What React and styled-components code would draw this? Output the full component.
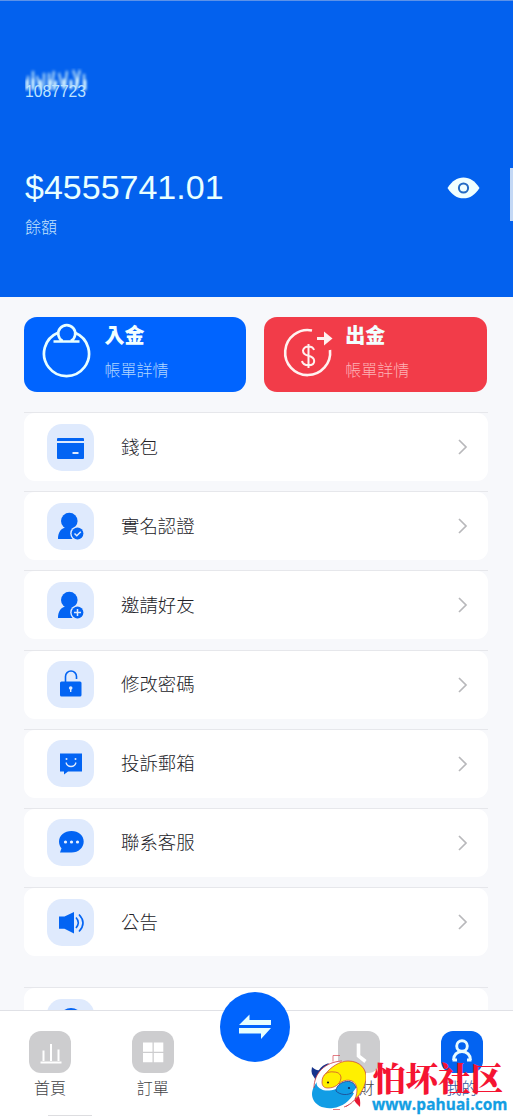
import React from "react";
import styled, { createGlobalStyle } from "styled-components";

const GlobalStyle = createGlobalStyle`
  * {
    box-sizing: border-box;
  }

  body {
    margin: 0;
    background: #f7f8fb;
    font-family: "Liberation Sans", "Noto Sans CJK TC", sans-serif;
    font-weight: 300;
  }
`;

const Screen = styled.div`
  position: relative;
  display: flex;
  flex-direction: column;
  width: 513px;
  height: 1116px;
  overflow: hidden;
  background: #f7f8fb;
`;

const Header = styled.header`
  position: relative;
  flex: none;
  height: 297px;
  padding: 66px 33px 0 25px;
  background: #0361ee;
  border-top: 1px solid #5d92e8;
  color: #e9ffff;
`;

const UserName = styled.div`
  height: 16px;

  svg {
    display: block;
  }
`;

const UserId = styled.div`
  height: 18px;
  font-size: 15.7px;
  line-height: 18px;
  color: #bfe4ff;
`;

const BalanceRow = styled.div`
  display: flex;
  align-items: center;
  justify-content: space-between;
  margin-top: 67px;
  height: 40px;
`;

const Balance = styled.div`
  margin-top: -2px;
  font-size: 34px;
  font-weight: 400;
  line-height: 40px;
`;

const BalanceLabel = styled.div`
  margin-top: 8px;
  font-size: 16px;
  line-height: 24px;
  color: #c4e3fc;
`;

const ScrollThumb = styled.div`
  position: absolute;
  top: 167px;
  right: 0;
  width: 3px;
  height: 53px;
  background: #c3d8f5;
`;

const Content = styled.main`
  flex: 1;
  min-height: 0;
  padding: 20px 25px 0 24px;
  overflow: hidden;
`;

const Actions = styled.div`
  display: grid;
  grid-template-columns: 1fr 1fr;
  gap: 18px;
  margin: 0 1px 0 -0.5px;
`;

const ActionCard = styled.div`
  display: flex;
  height: 75px;
  padding-left: 17px;
  border-radius: 13px;
  background: ${({ $color }) => $color};

  svg {
    flex: none;
    margin-top: 5px;
  }
`;

const ActionText = styled.div`
  margin-left: 12px;
`;

const ActionTitle = styled.div`
  margin-top: 5px;
  font-size: 20px;
  font-weight: 900;
  line-height: 28px;
  color: #f2ffff;
`;

const ActionDesc = styled.div`
  margin-top: 10px;
  font-size: 16px;
  line-height: 22px;
  color: ${({ $color }) => $color};
`;

const Menu = styled.div`
  margin-top: 20px;
`;

const MenuSlot = styled.div`
  height: 70px;
  margin-bottom: ${({ $last }) => ($last ? 30 : 9.2)}px;
  border-top: 1px solid #e6e7eb;
`;

const MenuRow = styled.div`
  display: flex;
  align-items: center;
  height: 68px;
  padding: 0 18px 0 23px;
  border-radius: 11px;
  background: #fff;
`;

const MenuIcon = styled.div`
  width: 47px;
  height: 47px;
  border-radius: 15px;
  background: #dfeafd;

  svg {
    display: block;
  }
`;

const MenuText = styled.div`
  flex: 1;
  margin-left: 27px;
  padding-top: 1px;
  font-size: 18.4px;
  line-height: 28px;
  color: #222228;
`;

const TabBar = styled.nav`
  display: grid;
  grid-template-columns: repeat(5, 102.9px);
  flex: none;
  height: 106px;
  margin-left: -1.5px;
  border-top: 1px solid #e0e1e6;
  background: #fff;
`;

const Tab = styled.div`
  display: flex;
  flex-direction: column;
  align-items: center;
  padding-top: 20px;
`;

const TabIcon = styled.div`
  width: 42px;
  height: 42px;
  border-radius: 12px;
  background: ${({ $active }) => ($active ? "#0363f1" : "#cdcdcf")};

  svg {
    display: block;
  }
`;

const TabLabel = styled.div`
  margin-top: 5px;
  font-size: 16px;
  line-height: 22px;
  color: ${({ $active }) => ($active ? "#3155a0" : "#444448")};
`;

const SwapButton = styled.div`
  flex: none;
  width: 70px;
  height: 70px;
  margin: -39px 1px 0 0;
  border-radius: 50%;
  background: #0064fd;
`;

const HomeLine = styled.div`
  position: absolute;
  bottom: 0;
  left: 48px;
  width: 44px;
  height: 1px;
  background: #dddde0;
`;

const Brand = styled.div`
  position: absolute;
  left: 306px;
  top: 1054px;
  display: flex;
`;

const BrandName = styled.div`
  height: 38px;
  margin: 4px 0 0 7px;
  font-family: "Noto Serif CJK SC", "Noto Sans CJK SC", sans-serif;
  font-size: 32.5px;
  font-weight: 900;
  line-height: 38px;
  white-space: nowrap;
  color: #f51432;
`;

const BrandUrl = styled.div`
  margin-left: 6px;
  font-family: "Open Sans", sans-serif;
  font-size: 15.4px;
  font-weight: 700;
  line-height: 18px;
  letter-spacing: 0.1px;
  color: #139ee3;
  -webkit-text-stroke: 0.3px #139ee3;
`;

const BLUE = "#0364f3";

const Person = () => (
  <>
    <circle cx="22.300" cy="18" r="8.300" fill={BLUE} />
    <path d="M17 23h10.500l4 5v8H11c0-6.500 2.500-10 7-11.500z" fill={BLUE} />
    <circle cx="30.500" cy="30.500" r="7.300" fill="#dfeafd" />
    <circle cx="30.500" cy="30.500" r="5.900" fill={BLUE} />
  </>
);

const icons = {
  wallet: (
    <>
      <path d="M10 17v-2q0-1 1-1h25q1 0 1 1v2z" fill={BLUE} />
      <path d="M10 19h27v15q0 1-1 1H11q-1 0-1-1z" fill={BLUE} />
      <path d="M25.500 29h6" stroke="#dfeafd" strokeWidth="2" />
    </>
  ),
  verify: (
    <>
      <Person />
      <path d="m27.500 30.500 2.300 2.300 4-4" fill="none" stroke="#dfeafd" strokeWidth="1.500" />
    </>
  ),
  invite: (
    <>
      <Person />
      <path d="M30.500 27v7M27 30.500h7" stroke="#dfeafd" strokeWidth="1.500" />
    </>
  ),
  lock: (
    <>
      <path d="M18.500 21v-5.500a5.500 5.500 0 0 1 11 0V18" fill="none" stroke={BLUE} strokeWidth="1.600" />
      <rect x="13" y="20.500" width="21.500" height="15" rx="1.500" fill={BLUE} />
      <circle cx="23.700" cy="27" r="1.800" fill="#dfeafd" />
      <path d="M23.700 27v4" stroke="#dfeafd" strokeWidth="1.400" />
    </>
  ),
  mail: (
    <>
      <path d="M13 13.500h22v18H21l-4 3v-3h-4z" fill={BLUE} />
      <circle cx="19.500" cy="19" r="1" fill="#dfeafd" />
      <circle cx="28.500" cy="19" r="1" fill="#dfeafd" />
      <path d="M19 22.500q1 4 5 4t5-4" fill="none" stroke="#dfeafd" strokeWidth="1.300" />
    </>
  ),
  chat: (
    <>
      <path d="M24.500 12C17.500 12 12 16.500 12 22.500c0 3 1 5 2.500 6.800L13 33.500h11.500c7 0 12.200-4.800 12.200-11S31.500 12 24.500 12z" fill={BLUE} />
      <circle cx="18.500" cy="23" r="1.600" fill="#e9f2ff" />
      <circle cx="24.500" cy="23" r="1.600" fill="#e9f2ff" />
      <circle cx="30.500" cy="23" r="1.600" fill="#e9f2ff" />
    </>
  ),
  notice: (
    <>
      <path d="M12 17.500h5.500L27 13v21.500l-9.500-4.700H12z" fill={BLUE} />
      <path d="M29 18.500q4.500 5 0 10.500M32 15.500q8 8.500 0 17" fill="none" stroke={BLUE} strokeWidth="1.600" />
    </>
  ),
  more: <circle cx="24" cy="21" r="12" fill={BLUE} />,
};

const menuItems = [
  { icon: "wallet", label: "錢包" },
  { icon: "verify", label: "實名認證" },
  { icon: "invite", label: "邀請好友" },
  { icon: "lock", label: "修改密碼" },
  { icon: "mail", label: "投訴郵箱" },
  { icon: "chat", label: "聯系客服" },
  { icon: "notice", label: "公告", last: true },
  { icon: "more", label: "" },
];

const tabs = [
  {
    label: "首頁",
    icon: <path d="M11.500 31.500h21M14.500 30V19.500M22 30V13M29.500 30V18.500" stroke="#fff" strokeWidth="2" />,
  },
  {
    label: "訂單",
    icon: <path d="M11 11.500h9.500v9.300H11zM21.800 11.500h9.500v9.300h-9.500zM11 22h9.500v9.300H11zM21.800 22h9.500v9.300h-9.500z" fill="#fff" />,
  },
  { swap: true },
  {
    label: "理財",
    icon: <path d="M20.500 12.500V25l7 5.500" fill="none" stroke="#fff" strokeWidth="3.600" />,
  },
  {
    label: "我的",
    active: true,
    icon: (
      <g fill="none" stroke="#e8fbff" strokeWidth="2.900">
        <circle cx="21" cy="15" r="5.300" />
        <path d="M12.500 29c0-5 3.500-8.500 8.500-8.500s8.500 3.500 8.500 8.500M11.500 29H16M26 29h4.500" />
      </g>
    ),
  },
];

const BlurredName = () => (
  <svg width="66" height="28" viewBox="0 0 66 28">
    <defs>
      <filter id="soft">
        <feGaussianBlur stdDeviation="0.8 1.4" />
      </filter>
    </defs>
    <g filter="url(#soft)" fill="none">
      <path d="M3 9v10M8 4v16M12 9l2 10M19 6v14M24 6v13M29 4l-2 14M34 6l3 13M42 4l-2 15M48 3l5 14M55 3l-4 14M59 7v12" stroke="#78b2f4" strokeWidth="3.300" />
      <path d="M2 13v10M8 12v11M15 13l1 10M25 13v10M31 14l-2 9M39 12v10M46 13v9M53 11l-2 11M60 13v10" stroke="#d2f2ff" strokeWidth="3" />
    </g>
  </svg>
);

const DepositIcon = () => (
  <svg width="52" height="60" viewBox="0 0 52 60" fill="none" stroke="#e9ffff" strokeWidth="2.700">
    <path d="M17 10.700a22.500 22.500 0 1 0 17 0" />
    <path d="M12.500 19.500h26M21.500 19a8.500 8.500 0 1 1 8.500 0" />
  </svg>
);

const WithdrawIcon = () => (
  <svg width="52" height="60" viewBox="0 0 52 60" fill="none" stroke="#fff2f0" strokeWidth="2.600">
    <path d="M31 8.500A22.500 22.500 0 1 0 49 28" />
    <path d="M36 16.500h8" strokeWidth="3" />
    <path d="m43 9.500 8.500 7-8.500 7z" fill="#fff2f0" stroke="none" />
    <path d="M27.500 22v24M33 28q-1-3.500-5.500-3.500T22 28.500q0 4 5.500 5.300t5.700 5.200q0 4.300-5.700 4.300T21 39" strokeWidth="2" />
  </svg>
);

const Fish = () => (
  <svg width="60" height="60" viewBox="0 0 60 60">
    <path d="M11 28 6 20q-1-3 0-7 5 4 7 3 3-5 10-7-5 6-6 12z" fill="#17338c" />
    <path d="M49 35l3 6q3 4 2 12l-4-4-2-3-8 7q1-7 8-13z" fill="#e71731" />
    <path d="M8 34C8 19 19 8 36 7c15 0 24 9 23 19-2 13-9 21-21 27z" fill="#fff" />
    <path d="M18 22C24 13 34 7 42 7c12 0 19 8 18 18-1 8-5 15-11 20 3-7 3-15-3-18-5-2-10 0-13 3z" fill="#fff000" stroke="#c7353e" strokeWidth="0.700" />
    <path d="M16 28c0-8 6-11 12-10 5 0 7 3 7 6-1 7-7 10-13 10-4 0-6-2-6-6z" fill="#fff000" stroke="#c7353e" strokeWidth="0.700" />
    <path d="M30 35c-6 2-12 2-15 0-4-2-5-5-4-7-5 6-6 12-4 17 3 7 11 10 20 9 9-1 17-7 21-15z" fill="#119de5" />
    <path d="M50 34c-1-5-6-8-12-6-6 2-8 6-8 9 4 4 12 5 17 1" fill="#119de5" stroke="#21438a" strokeWidth="0.800" />
    <path d="M8 34C8 19 19 8 36 7M38 53c6-2 9-5 12-9" fill="none" stroke="#c7353e" strokeWidth="0.800" />
    <circle cx="22" cy="28.500" r="1.100" fill="#222" />
    <circle cx="43" cy="34" r="1.100" fill="#162858" />
    <path d="M27 1.500h7M27 1.500v6M27 55.500h7" fill="none" stroke="#d94550" strokeWidth="0.700" />
  </svg>
);

const App = () => {
  return (
    <>
      <GlobalStyle />
      <Screen>
        <Header>
          <UserName>
            <BlurredName />
          </UserName>
          <UserId>1087723</UserId>
          <BalanceRow>
            <Balance>$4555741.01</Balance>
            <svg width="33" height="24" viewBox="0 0 33 24">
              <path d="M.500 12C5 5 10 1.500 16.500 1.500S28 5 32.500 12C28 19 23 22.300 16.500 22.300S5 19 .500 12z" fill="#f0ffff" />
              <circle cx="16.500" cy="12" r="4.600" fill="none" stroke="#236bc4" strokeWidth="2" />
            </svg>
          </BalanceRow>
          <BalanceLabel>餘額</BalanceLabel>
          <ScrollThumb />
        </Header>

        <Content>
          <Actions>
            <ActionCard $color="#0064ff">
              <DepositIcon />
              <ActionText>
                <ActionTitle>入金</ActionTitle>
                <ActionDesc $color="#b0d6ff">帳單詳情</ActionDesc>
              </ActionText>
            </ActionCard>
            <ActionCard $color="#f23c49">
              <WithdrawIcon />
              <ActionText>
                <ActionTitle>出金</ActionTitle>
                <ActionDesc $color="#fdb2b5">帳單詳情</ActionDesc>
              </ActionText>
            </ActionCard>
          </Actions>

          <Menu>
            {menuItems.map((item) => (
              <MenuSlot key={item.icon} $last={item.last}>
                <MenuRow>
                  <MenuIcon>
                    <svg width="47" height="47" viewBox="0 0 47 47">
                      {icons[item.icon]}
                    </svg>
                  </MenuIcon>
                  <MenuText>{item.label}</MenuText>
                  <svg width="14" height="18" viewBox="0 0 14 18">
                    <path d="m3 2 7 7-7 7" fill="none" stroke="#b8b8bb" strokeWidth="1.700" />
                  </svg>
                </MenuRow>
              </MenuSlot>
            ))}
          </Menu>
        </Content>

        <TabBar>
          {tabs.map((tab, index) =>
            tab.swap ? (
              <Tab key={index}>
                <SwapButton>
                  <svg width="70" height="70" viewBox="0 0 70 70">
                    <path d="M19 33 29.500 22.500V28H51v5zM19 36h32L41 47v-5.500H19z" fill="#e6ffff" />
                  </svg>
                </SwapButton>
              </Tab>
            ) : (
              <Tab key={index}>
                <TabIcon $active={tab.active}>
                  <svg width="42" height="42" viewBox="0 0 42 42">
                    {tab.icon}
                  </svg>
                </TabIcon>
                <TabLabel $active={tab.active}>{tab.label}</TabLabel>
              </Tab>
            )
          )}
        </TabBar>
        <HomeLine />

        <Brand>
          <Fish />
          <div>
            <BrandName>怕坏社区</BrandName>
            <BrandUrl>www.pahuai.com</BrandUrl>
          </div>
        </Brand>
      </Screen>
    </>
  );
};

export default App;
